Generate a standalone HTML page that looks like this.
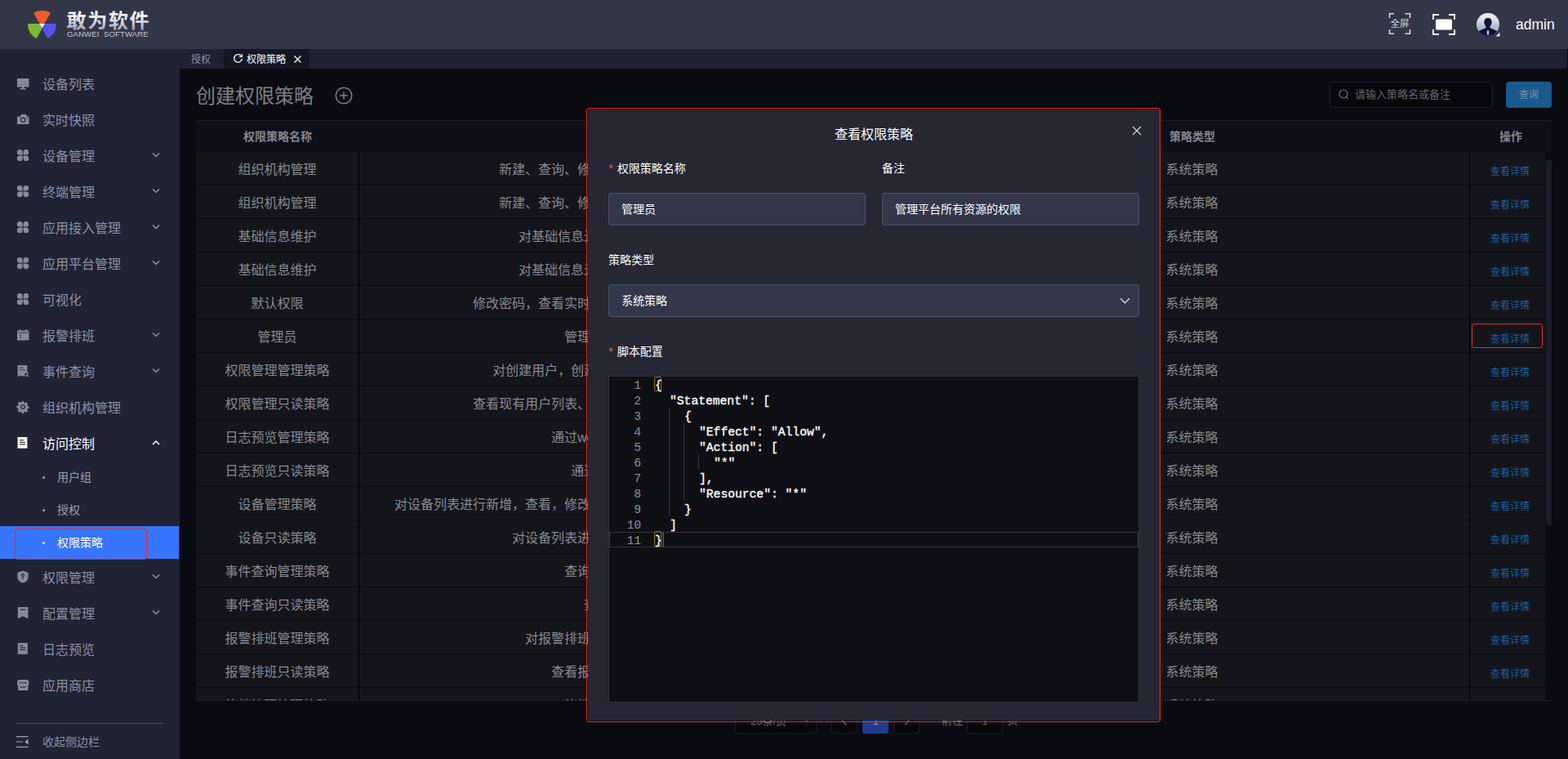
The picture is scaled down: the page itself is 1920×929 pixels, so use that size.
<!DOCTYPE html><html lang="zh-CN"><head>
<meta charset="utf-8">
<title>权限策略</title>
<style>
*{box-sizing:border-box;margin:0;padding:0}
html,body{width:1920px;height:929px;overflow:hidden;background:#0a0b11;font-family:"Liberation Sans","Noto Sans CJK SC",sans-serif;color:#8c8e95}
.abs{position:absolute}
#header{position:absolute;left:0;top:0;width:1920px;height:60px;background:#323748}
#sidebar{position:absolute;left:0;top:60px;width:220px;height:869px;background:#1f2333}
#tabbar{position:absolute;left:220px;top:60px;width:1699px;height:24px;background:#1d2131;border-radius:0 0 4px 0}
#content{position:absolute;left:220px;top:84px;width:1700px;height:845px;background:#0a0b11;overflow:hidden}
/* sidebar */
.mi{position:absolute;left:0;width:220px;height:44px;line-height:47px;font-size:16px;color:#8b91a5;padding-left:52px;white-space:nowrap}
.mi svg.ic{position:absolute;left:20px;top:14px;width:16px;height:16px}
.mi svg.ar{position:absolute;left:186px;top:18px;width:10px;height:8px}
.si{position:absolute;left:0;width:219px;height:40px;line-height:41px;font-size:14px;color:#9da0ab;padding-left:70px;white-space:nowrap}
.si i{position:absolute;left:52px;top:18.5px;width:3px;height:3px;border-radius:50%;background:#9da0ab}
.si.on{background:#3875ff;color:#fff}
.si.on i{background:#fff}


.th{position:absolute;top:64px;height:38px;line-height:39px;font-size:14px;font-weight:bold;color:#85878e;text-align:center;white-space:nowrap}
.tr{position:absolute;left:0;width:1660px;height:41px}
.td{position:absolute;top:0;height:40px;line-height:43.5px;font-size:16px;color:#888a91;background:#13151b;white-space:nowrap;overflow:hidden;text-align:center}
.c1{left:0;width:199px}.c2{left:200px;width:679px;text-align:left}.c3{left:880px;width:679px}.c4{left:1560px;width:92px;font-size:12px;color:#1c5d9e;padding-left:6px;line-height:48px}
.pb{position:absolute;top:786px;height:28px;line-height:23px;font-size:13px;color:#6a6c73;border:1px solid #1c1e27;border-radius:3px;background:#07080c;text-align:center;white-space:nowrap}

#modal{position:absolute;left:720px;top:134px;width:700px;height:748px}
.lb{position:absolute;height:20px;line-height:20px;font-size:14px;color:#fff;white-space:nowrap}
.lb b{color:#f4565c;font-weight:normal;margin-right:5px;font-size:15px}
.ip{position:absolute;height:40px;line-height:38px;font-size:14px;color:#fff;padding-left:15px;background:#32384a;border:1px solid #4b5162;border-radius:3px;white-space:nowrap;overflow:hidden}
#ed{position:absolute;left:25px;top:326px;width:650px;height:400px;background:#0e0f15;border:1px solid #2e3037;overflow:hidden}
.ln{position:absolute;left:0;width:39px;height:19px;line-height:19px;text-align:right;font-family:"Liberation Mono",monospace;font-size:14.67px;color:#8e8f94;white-space:pre}
.cl{position:absolute;left:54px;height:19px;line-height:19px;font-family:"Liberation Mono",monospace;font-size:14.67px;color:#fff;white-space:pre;-webkit-text-stroke:0.35px #fff}
</style>
</head>
<body>
<div id="header">
<svg class="abs" style="left:30px;top:8px" width="44" height="44" viewBox="30 8 44 44">
<path d="M51.5 34 L41 15.8 A21 21 0 0 1 62 15.8 Z" fill="#f05a2b"></path>
<path d="M55 29 L34 29 A21 21 0 0 0 44.5 47.2 Z" fill="#7ab832"></path>
<path d="M48 29 L69 29 A21 21 0 0 1 58.5 47.2 Z" fill="#5652e8"></path>
<path d="M48 29 L55 29 L51.5 34 Z" fill="#ffffff"></path>
</svg>
<svg class="abs" id="logot" style="left:80px;top:10px" width="112" height="30" viewBox="-1.500 -23.500 112 30"><defs><linearGradient id="lg" x1="0" y1="-20" x2="0" y2="2" gradientUnits="userSpaceOnUse"><stop offset=".2" stop-color="#ffffff"></stop><stop offset="1" stop-color="#a4a8b8"></stop></linearGradient></defs><text x="0" y="0" font-size="24" font-weight="bold" letter-spacing="1.7" fill="url(#lg)" font-family="'Liberation Sans','Noto Sans CJK SC',sans-serif">敢为软件</text></svg>
<div class="abs" style="left:82px;top:37px;height:10px;line-height:10px;font-size:9.6px;color:#c5c8d2;white-space:pre;letter-spacing:0.1px">GANWEI  SOFTWARE</div>
<svg class="abs" style="left:1700px;top:15px" width="28" height="28" viewBox="0 0 28 28" fill="none" stroke="#d5d9ee" stroke-width="1.6">
<path d="M1.5 7V1.8H7M20.5 1.8H26.5V7M26.5 21V26.2H20.5M7 26.2H1.5V21"></path>
</svg>
<svg class="abs" style="left:1702px;top:20px" width="26" height="18" viewBox="-.5 -13.200 26 18"><text x="0" y="0" font-size="11.5" fill="#d0d2da" font-family="'Liberation Sans','Noto Sans CJK SC',sans-serif">全屏</text></svg>
<svg class="abs" style="left:1753px;top:16px" width="30" height="28" viewBox="0 0 30 28" fill="none" stroke="#ffffff" stroke-width="1.800">
<path d="M2 8V2H9M21 2H28V8M28 20V26H21M9 26H2V20"></path>
<rect x="5" y="7.5" width="20" height="13" rx="1.5" fill="#fff" stroke="none"></rect>
</svg>
<svg class="abs" style="left:1807px;top:15px" width="30" height="30" viewBox="0 0 30 30">
<defs><linearGradient id="ag" x1="0" y1="0" x2="0" y2="1"><stop offset="0" stop-color="#fafbfd"></stop><stop offset="1" stop-color="#8b93ab"></stop></linearGradient>
<clipPath id="ac"><circle cx="15" cy="15" r="14"></circle></clipPath></defs>
<circle cx="15" cy="15" r="14" fill="url(#ag)"></circle>
<g clip-path="url(#ac)" fill="#0c1530">
<ellipse cx="15" cy="12.3" rx="4.7" ry="5.6"></ellipse>
<path d="M12.6 16h4.8v3l7.6 3.4c1.6.8 2.4 2 2.4 4V30H2.600v-3.600c0-2 .8-3.200 2.400-4l7.600-3.400z"></path>
<path d="M14.200 22h1.600l.5 4.500-1.300 1.700-1.300-1.700z" fill="#c9cedc"></path>
</g>
<path d="M29.500 24.500V29.500H24.500z" fill="#e6e8ef"></path>
</svg>
<div class="abs" style="left:1856px;top:19px;height:22px;line-height:22px;font-size:17.5px;color:#fff;white-space:nowrap">admin</div>
</div>
<div id="sidebar">
<div class="mi" style="top:20px"><svg class="ic" style="top:14px" viewBox="0 0 16 16"><g transform="translate(0,.6)"><path d="M1 1.500h14.400v10.500H1z M7 12h2.400v1.600H7z M4.500 13.500h7.400V15H4.500z" fill="#878b99"></path><rect x="2.200" y="8.600" width="12" height="1" fill="#6c7080"></rect></g></svg>设备列表</div>
<div class="mi" style="top:64px"><svg class="ic" style="top:14px" viewBox="0 0 16 16"><g transform="translate(0,1)"><path d="M1 3.600h4l1-2.600h6l1 2.600h2.400V13H1z" fill="#878b99"></path><circle cx="8.200" cy="7.700" r="2.600" fill="none" stroke="#1f2333" stroke-width="1.100"></circle><rect x="12.600" y="5" width="1" height="1.600" fill="#1f2333"></rect></g></svg>实时快照</div>
<div class="mi" style="top:108px"><svg class="ic" style="top:14px" viewBox="0 0 16 16"><path d="M4.200 .9a3.400 3.400 0 0 1 3.400 3.400v3.300H4.200a3.350 3.350 0 0 1 0-6.700z M11.900 .9a3.350 3.350 0 0 1 0 6.700H8.500V4.300A3.400 3.400 0 0 1 11.900 .9z M4.200 15.200a3.350 3.350 0 0 1 0-6.700h3.400v3.300a3.400 3.400 0 0 1-3.400 3.400z M11.900 15.200a3.400 3.400 0 0 1-3.400-3.400V8.500h3.400a3.350 3.350 0 0 1 0 6.700z" fill="#878b99"></path></svg>设备管理<svg class="ar" viewBox="0 0 10 8" fill="none" stroke="#8b91a5" stroke-width="1.500"><path d="M1 1.500l4 4 4-4"></path></svg></div>
<div class="mi" style="top:152px"><svg class="ic" style="top:14px" viewBox="0 0 16 16"><path d="M4.200 .9a3.400 3.400 0 0 1 3.400 3.400v3.300H4.200a3.350 3.350 0 0 1 0-6.700z M11.900 .9a3.350 3.350 0 0 1 0 6.700H8.500V4.300A3.400 3.400 0 0 1 11.900 .9z M4.200 15.200a3.350 3.350 0 0 1 0-6.700h3.400v3.300a3.400 3.400 0 0 1-3.400 3.400z M11.900 15.200a3.400 3.400 0 0 1-3.400-3.400V8.500h3.400a3.350 3.350 0 0 1 0 6.700z" fill="#878b99"></path></svg>终端管理<svg class="ar" viewBox="0 0 10 8" fill="none" stroke="#8b91a5" stroke-width="1.500"><path d="M1 1.500l4 4 4-4"></path></svg></div>
<div class="mi" style="top:196px"><svg class="ic" style="top:14px" viewBox="0 0 16 16"><path d="M4.200 .9a3.400 3.400 0 0 1 3.400 3.400v3.300H4.200a3.350 3.350 0 0 1 0-6.700z M11.900 .9a3.350 3.350 0 0 1 0 6.700H8.500V4.300A3.400 3.400 0 0 1 11.900 .9z M4.200 15.200a3.350 3.350 0 0 1 0-6.700h3.400v3.300a3.400 3.400 0 0 1-3.400 3.400z M11.900 15.200a3.400 3.400 0 0 1-3.400-3.400V8.500h3.400a3.350 3.350 0 0 1 0 6.700z" fill="#878b99"></path></svg>应用接入管理<svg class="ar" viewBox="0 0 10 8" fill="none" stroke="#8b91a5" stroke-width="1.500"><path d="M1 1.500l4 4 4-4"></path></svg></div>
<div class="mi" style="top:240px"><svg class="ic" style="top:14px" viewBox="0 0 16 16"><path d="M4.200 .9a3.400 3.400 0 0 1 3.400 3.400v3.300H4.200a3.350 3.350 0 0 1 0-6.700z M11.900 .9a3.350 3.350 0 0 1 0 6.700H8.500V4.300A3.400 3.400 0 0 1 11.900 .9z M4.200 15.200a3.350 3.350 0 0 1 0-6.700h3.400v3.300a3.400 3.400 0 0 1-3.400 3.400z M11.900 15.200a3.400 3.400 0 0 1-3.400-3.400V8.500h3.400a3.350 3.350 0 0 1 0 6.700z" fill="#878b99"></path></svg>应用平台管理<svg class="ar" viewBox="0 0 10 8" fill="none" stroke="#8b91a5" stroke-width="1.500"><path d="M1 1.500l4 4 4-4"></path></svg></div>
<div class="mi" style="top:284px"><svg class="ic" style="top:14px" viewBox="0 0 16 16"><path d="M4.200 .9a3.400 3.400 0 0 1 3.400 3.400v3.300H4.200a3.350 3.350 0 0 1 0-6.700z M11.900 .9a3.350 3.350 0 0 1 0 6.700H8.500V4.300A3.400 3.400 0 0 1 11.900 .9z M4.200 15.200a3.350 3.350 0 0 1 0-6.700h3.400v3.300a3.400 3.400 0 0 1-3.400 3.400z M11.900 15.200a3.400 3.400 0 0 1-3.400-3.400V8.500h3.400a3.350 3.350 0 0 1 0 6.700z" fill="#878b99"></path></svg>可视化</div>
<div class="mi" style="top:328px"><svg class="ic" style="top:14px" viewBox="0 0 16 16"><path d="M1 2.600h2.600V1h1.800v1.600h5.600V1h1.800v1.600h2.600V14.400H1z" fill="#878b99"></path><rect x="2" y="4.600" width="12.400" height="1" fill="#1f2333" opacity=".75"></rect><rect x="4" y="7.400" width="2.400" height="1.200" fill="#1f2333" opacity=".8"></rect><rect x="4" y="10.400" width="2.400" height="1.200" fill="#1f2333" opacity=".8"></rect></svg>报警排班<svg class="ar" viewBox="0 0 10 8" fill="none" stroke="#8b91a5" stroke-width="1.500"><path d="M1 1.500l4 4 4-4"></path></svg></div>
<div class="mi" style="top:372px"><svg class="ic" style="top:14px" viewBox="0 0 16 16"><path d="M1.600 1h11.800v9.500a3.400 3.400 0 0 0-4.400 4H7.200l-1.600-1.300L4 14.500H1.600z" fill="#878b99"></path><rect x="4" y="3.600" width="5" height="1.100" fill="#1f2333" opacity=".7"></rect><rect x="4" y="6.200" width="7" height="1.100" fill="#1f2333" opacity=".7"></rect><circle cx="11.800" cy="12" r="2.100" fill="none" stroke="#878b99" stroke-width="1.200"></circle><path d="M13.300 13.500l1.700 1.700" stroke="#878b99" stroke-width="1.200"></path></svg>事件查询<svg class="ar" viewBox="0 0 10 8" fill="none" stroke="#8b91a5" stroke-width="1.500"><path d="M1 1.500l4 4 4-4"></path></svg></div>
<div class="mi" style="top:416px"><svg class="ic" style="top:14px" viewBox="0 0 16 16"><path d="M6.800 1h2.400l.4 1.800 1.300.6 1.600-1 1.700 1.700-1 1.600.6 1.300 1.800.4v2.400l-1.800.4-.6 1.300 1 1.600-1.700 1.700-1.600-1-1.300.6-.4 1.800H6.800l-.4-1.800-1.300-.6-1.600 1-1.700-1.700 1-1.600-.6-1.300L.4 9.200V6.800l1.800-.4.600-1.300-1-1.600 1.700-1.700 1.600 1 1.300-.6z" fill="#878b99"></path><circle cx="8" cy="8" r="2.300" fill="none" stroke="#1f2333" stroke-width="1.300"></circle></svg>组织机构管理</div>
<div class="mi" style="top:460px;color:#fff"><svg class="ic" style="top:14px" viewBox="0 0 16 16"><path d="M1.600 1h11.800v14.200l-1.500-1-1.500 1-1.400-1-1.500 1-1.500-1-1.500 1-1.500-1-1.400 1z" fill="#ffffff"></path><rect x="4" y="4.200" width="5" height="1.100" fill="#1f2333"></rect><rect x="4" y="6.800" width="7" height="1.100" fill="#1f2333"></rect><rect x="4" y="9.400" width="7" height="1.100" fill="#1f2333"></rect></svg>访问控制<svg class="ar" viewBox="0 0 10 8" fill="none" stroke="#ffffff" stroke-width="1.500"><path d="M1 6l4-4 4 4"></path></svg></div>
<div class="si" style="top:504px"><i></i>用户组</div>
<div class="si" style="top:544px"><i></i>授权</div>
<div class="si on" style="top:584px"><i></i>权限策略</div>
<div class="abs" style="left:18px;top:587px;width:162px;height:38px;border:1px solid #f2232a;border-radius:3px"></div>
<div class="mi" style="top:624px"><svg class="ic" style="top:14px" viewBox="0 0 16 16"><path d="M8 .600l6.600 2.400v5.200c0 3.400-2.600 6-6.600 7.400C4 14.200 1.400 11.600 1.400 8.200V3z" fill="#878b99"></path><circle cx="8" cy="5.800" r="1.500" fill="none" stroke="#1f2333" stroke-width="1.100"></circle><rect x="7.450" y="7.200" width="1.100" height="4" fill="#1f2333"></rect></svg>权限管理<svg class="ar" viewBox="0 0 10 8" fill="none" stroke="#8b91a5" stroke-width="1.500"><path d="M1 1.500l4 4 4-4"></path></svg></div>
<div class="mi" style="top:668px"><svg class="ic" style="top:14px" viewBox="0 0 16 16"><path d="M1.800 1h12.600v14.200L8.100 12.200 1.800 15.200z" fill="#878b99"></path><rect x="5" y="3.600" width="6.200" height="1.200" fill="#1f2333"></rect></svg>配置管理<svg class="ar" viewBox="0 0 10 8" fill="none" stroke="#8b91a5" stroke-width="1.500"><path d="M1 1.500l4 4 4-4"></path></svg></div>
<div class="mi" style="top:712px"><svg class="ic" style="top:14px" viewBox="0 0 16 16"><path d="M1.800 1h12v14.200l-1.500-1-1.500 1-1.500-1-1.500 1-1.500-1-1.500 1-1.500-1-1.500 1z" fill="#878b99"></path><rect x="4.200" y="3.800" width="4" height="1.100" fill="#1f2333"></rect><rect x="4.200" y="6.300" width="7" height="1.100" fill="#1f2333"></rect><rect x="4.200" y="8.800" width="7" height="1.100" fill="#1f2333"></rect></svg>日志预览</div>
<div class="mi" style="top:756px"><svg class="ic" style="top:14px" viewBox="0 0 16 16"><g transform="translate(0,.5)"><path d="M3.600 1.600h9.200c1.400 0 2.600 1.400 2.600 3v2.200c0 .8-.5 1.300-1 1.500v4.900c0 .8-.6 1.400-1.400 1.400H3.400c-.8 0-1.400-.6-1.400-1.400V8.300c-.5-.2-1-.7-1-1.500V4.600c0-1.600 1.200-3 2.600-3z" fill="#878b99"></path><rect x="3.200" y="4.600" width="10" height="1.100" fill="#1f2333" opacity=".8"></rect><rect x="4.400" y="9.800" width="7.600" height="1.300" fill="#1f2333" opacity=".8"></rect></g></svg>应用商店</div>
<div class="abs" style="left:20px;top:825px;width:180px;height:1px;background:#474c5f"></div>
<div class="abs" style="left:52px;top:838px;height:20px;line-height:20px;font-size:14px;color:#8b91a5;white-space:nowrap">收起侧边栏</div>
<svg class="abs" style="left:20px;top:840px" width="16" height="16" viewBox="0 0 16 16" fill="none" stroke="#9da1b0" stroke-width="1.200"><path d="M0 1.600h14.500M0 8h8M0 14.400h14.500"></path><path d="M14.600 4.600v6.800L10.200 8z" fill="#9da1b0" stroke="none"></path></svg>
</div>
<div id="tabbar">
<div class="abs" style="left:0;top:0;width:52px;height:24px;line-height:27px;font-size:12px;color:#8c90a0;text-align:center;white-space:nowrap">授权</div>
<div class="abs" style="left:54px;top:0;width:105px;height:24px;background:#141722"></div>
<svg class="abs" style="left:65px;top:5px" width="13" height="13" viewBox="0 0 13 13" fill="none" stroke="#fff" stroke-width="1.300"><path d="M10.800 4.200A4.800 4.800 0 1 0 11.300 6.800"></path><path d="M11.300 1v3.500H7.800" stroke-width="1.200"></path></svg>
<div class="abs" style="left:82px;top:0;height:24px;line-height:27px;font-size:12px;color:#fff;white-space:nowrap">权限策略</div>
<svg class="abs" style="left:140px;top:8px" width="9" height="9" viewBox="0 0 9 9" stroke="#fff" stroke-width="1.200"><path d="M.5.500l8 8M8.500.500l-8 8"></path></svg>
</div>
<div id="content">
<div class="abs" style="left:20px;top:17px;height:34px;line-height:34px;font-size:24px;color:#7d7f87;white-space:nowrap">创建权限策略</div>
<svg class="abs" style="left:190px;top:22px" width="22" height="22" viewBox="0 0 22 22" fill="none" stroke="#7d7f87" stroke-width="1.500"><circle cx="11" cy="11" r="9.800"></circle><path d="M11 6.200v9.600M6.200 11h9.600"></path></svg>
<div class="abs" style="left:1408px;top:16px;width:200px;height:32px;border:1px solid #1d1f28;border-radius:4px;background:#07080c"></div>
<svg class="abs" style="left:1418px;top:24px" width="15" height="15" viewBox="0 0 15 15" fill="none" stroke="#6d6f76" stroke-width="1.200"><circle cx="7" cy="7" r="5"></circle><path d="M10.600 10.600l2.200 2.200"></path></svg>
<div class="abs" style="left:1439px;top:16px;height:32px;line-height:32px;font-size:13px;color:#62646b;white-space:nowrap">请输入策略名或备注</div>
<div class="abs" style="left:1624px;top:16px;width:56px;height:32px;line-height:33px;border-radius:4px;background:#195a8c;color:#7793ad;font-size:12px;text-align:center;white-space:nowrap">查询</div>
<div class="abs" style="left:20px;top:63px;width:1660px;height:1px;background:#1c1e27"></div>
<div class="abs" style="left:20px;top:64px;width:1660px;height:38px;background:#0c0e18"></div>
<div class="th" style="left:20px;width:200px">权限策略名称</div>
<div class="th" style="left:900px;width:680px">策略类型</div>
<div class="th" style="left:1580px;width:100px">操作</div>
<div class="abs" id="tb" style="left:20px;top:102px;width:1660px;height:671px;overflow:hidden;background:#0a0b10">
<div class="tr" style="top:0px"><div class="td c1">组织机构管理</div><div class="td c2" style="padding-left:171px">新建、查询、修改、删除组织机构及其下属的用户信息</div><div class="td c3">系统策略</div><div class="td c4">查看详情</div></div>
<div class="tr" style="top:41px"><div class="td c1">组织机构管理</div><div class="td c2" style="padding-left:171px">新建、查询、修改、删除组织机构及其下属的用户信息</div><div class="td c3">系统策略</div><div class="td c4">查看详情</div></div>
<div class="tr" style="top:82px"><div class="td c1">基础信息维护</div><div class="td c2" style="padding-left:195px">对基础信息进行新增、修改、删除和查看的权限</div><div class="td c3">系统策略</div><div class="td c4">查看详情</div></div>
<div class="tr" style="top:123px"><div class="td c1">基础信息维护</div><div class="td c2" style="padding-left:195px">对基础信息进行新增、修改、删除和查看的权限</div><div class="td c3">系统策略</div><div class="td c4">查看详情</div></div>
<div class="tr" style="top:164px"><div class="td c1">默认权限</div><div class="td c2" style="padding-left:139px">修改密码，查看实时快照、设备列表等默认页面的基础权限</div><div class="td c3">系统策略</div><div class="td c4">查看详情</div></div>
<div class="tr" style="top:205px"><div class="td c1">管理员</div><div class="td c2" style="padding-left:251px">管理平台所有资源的权限</div><div class="td c3">系统策略</div><div class="td c4">查看详情</div></div>
<div class="tr" style="top:246px"><div class="td c1">权限管理管理策略</div><div class="td c2" style="padding-left:163px">对创建用户，创建用户组，创建策略以及授权的管理</div><div class="td c3">系统策略</div><div class="td c4">查看详情</div></div>
<div class="tr" style="top:287px"><div class="td c1">权限管理只读策略</div><div class="td c2" style="padding-left:139px">查看现有用户列表、用户组列表、策略列表的只读权限</div><div class="td c3">系统策略</div><div class="td c4">查看详情</div></div>
<div class="tr" style="top:328px"><div class="td c1">日志预览管理策略</div><div class="td c2" style="padding-left:235px">通过web页面查看并导出系统日志</div><div class="td c3">系统策略</div><div class="td c4">查看详情</div></div>
<div class="tr" style="top:369px"><div class="td c1">日志预览只读策略</div><div class="td c2" style="padding-left:259px">通过页面只读查看系统日志</div><div class="td c3">系统策略</div><div class="td c4">查看详情</div></div>
<div class="tr" style="top:410px"><div class="td c1">设备管理策略</div><div class="td c2" style="padding-left:43px">对设备列表进行新增，查看，修改，删除，以及对测点、模板的所有管理操作权限</div><div class="td c3">系统策略</div><div class="td c4">查看详情</div></div>
<div class="tr" style="top:451px"><div class="td c1">设备只读策略</div><div class="td c2" style="padding-left:187px">对设备列表进行查看及测点查看的只读权限</div><div class="td c3">系统策略</div><div class="td c4">查看详情</div></div>
<div class="tr" style="top:492px"><div class="td c1">事件查询管理策略</div><div class="td c2" style="padding-left:251px">查询并导出所有事件记录</div><div class="td c3">系统策略</div><div class="td c4">查看详情</div></div>
<div class="tr" style="top:533px"><div class="td c1">事件查询只读策略</div><div class="td c2" style="padding-left:275px">查询事件记录的只读权</div><div class="td c3">系统策略</div><div class="td c4">查看详情</div></div>
<div class="tr" style="top:574px"><div class="td c1">报警排班管理策略</div><div class="td c2" style="padding-left:203px">对报警排班进行新增修改删除的管理</div><div class="td c3">系统策略</div><div class="td c4">查看详情</div></div>
<div class="tr" style="top:615px"><div class="td c1">报警排班只读策略</div><div class="td c2" style="padding-left:235px">查看报警排班的只读权限</div><div class="td c3">系统策略</div><div class="td c4">查看详情</div></div>
<div class="tr" style="top:656px"><div class="td c1">终端管理管理策略</div><div class="td c2" style="padding-left:251px">终端的所有管理权限</div><div class="td c3">系统策略</div><div class="td c4">查看详情</div></div>
<div class="abs" style="left:199px;top:0;width:1px;height:671px;background:#000"></div>
<div class="abs" style="left:879px;top:0;width:1px;height:671px;background:#000"></div>
<div class="abs" style="left:1559px;top:0;width:1px;height:671px;background:#000"></div>
<div class="abs" style="left:1652px;top:0;width:8px;height:671px;background:#0a0b10"></div>
<div class="abs" style="left:1652.500px;top:9px;width:7px;height:448px;border-radius:3.500px;background:#1a1d27"></div>
</div>
<div class="abs" style="left:20px;top:773px;width:1660px;height:1px;background:#1e2029"></div>
<div class="abs" style="left:1582px;top:312px;width:87px;height:30px;border:1px solid #f2232a;border-radius:3px"></div>
<div id="pager">
<div class="pb" style="left:680px;width:100px;text-align:left;padding-left:18px">25条/页<svg class="abs" style="left:82px;top:7px" width="9" height="7" viewBox="0 0 9 7" fill="none" stroke="#55575e" stroke-width="1.200"><path d="M1 1l3.500 3.800L8 1"></path></svg></div>
<div class="pb" style="left:798px;width:32px"><svg class="abs" style="left:11px;top:6px" width="8" height="11" viewBox="0 0 8 11" fill="none" stroke="#6a6c73" stroke-width="1.300"><path d="M6 1L1.500 5.500 6 10"></path></svg></div>
<div class="pb" style="left:836px;width:32px;background:#1e3b8c;border-color:#1e3b8c;color:#8e9cc4">1</div>
<div class="pb" style="left:874px;width:32px"><svg class="abs" style="left:11px;top:6px" width="8" height="11" viewBox="0 0 8 11" fill="none" stroke="#6a6c73" stroke-width="1.300"><path d="M2 1l4.500 4.500L2 10"></path></svg></div>
<div class="pb" style="left:928px;width:36px;border:none;background:none">前往</div>
<div class="pb" style="left:964px;width:44px">1</div>
<div class="pb" style="left:1008px;width:24px;border:none;background:none">页</div>
</div>
</div>
<div id="modal">
<div class="abs" style="left:0;top:0;width:700px;height:748px;background:#252733"></div>
<div class="abs" style="left:0;top:17px;width:700px;height:28px;line-height:28px;font-size:16px;color:#fff;text-align:center;white-space:nowrap">查看权限策略</div>
<svg class="abs" style="left:666px;top:20px" width="12" height="12" viewBox="0 0 12 12" stroke="#dcdde2" stroke-width="1.100"><path d="M1 1l10 10M11 1L1 11"></path></svg>
<div class="lb" style="left:25px;top:62px"><b>*</b>权限策略名称</div>
<div class="lb" style="left:360px;top:62px">备注</div>
<div class="ip" style="left:25px;top:102px;width:315px">管理员</div>
<div class="ip" style="left:360px;top:102px;width:315px">管理平台所有资源的权限</div>
<div class="lb" style="left:25px;top:174px">策略类型</div>
<div class="ip" style="left:25px;top:214px;width:650px">系统策略</div>
<svg class="abs" style="left:651px;top:230px" width="13" height="9" viewBox="0 0 13 9" fill="none" stroke="#d6d8de" stroke-width="1.400"><path d="M1 1.200l5.500 5.600L12 1.200"></path></svg>
<div class="lb" style="left:25px;top:286px"><b>*</b>脚本配置</div>
<div id="ed">
<div class="abs" style="left:0;top:190px;width:648px;height:19px;border:1px solid #32343b"></div>
<div class="abs" style="left:73px;top:38px;width:1px;height:133px;background:#33343a"></div>
<div class="abs" style="left:91px;top:57px;width:1px;height:95px;background:#33343a"></div>
<div class="abs" style="left:109px;top:95px;width:1px;height:19px;background:#33343a"></div>
<div class="abs" style="left:55px;top:0;width:9px;height:18px;border:1px solid #857510;border-radius:2px"></div>
<div class="abs" style="left:55px;top:189px;width:9px;height:19px;border:1px solid #857510;border-radius:2px"></div>
<div class="abs" style="left:65px;top:190px;width:2px;height:19px;background:#46484f"></div>
<div class="ln" style="top:2px">1</div><div class="cl" style="top:2px;left:56px">{</div>
<div class="ln" style="top:21px">2</div><div class="cl" style="top:21px;left:74px">"Statement": [</div>
<div class="ln" style="top:40px">3</div><div class="cl" style="top:40px;left:92px">{</div>
<div class="ln" style="top:59px">4</div><div class="cl" style="top:59px;left:110px">"Effect": "Allow",</div>
<div class="ln" style="top:78px">5</div><div class="cl" style="top:78px;left:110px">"Action": [</div>
<div class="ln" style="top:97px">6</div><div class="cl" style="top:97px;left:128px">"*"</div>
<div class="ln" style="top:116px">7</div><div class="cl" style="top:116px;left:110px">],</div>
<div class="ln" style="top:135px">8</div><div class="cl" style="top:135px;left:110px">"Resource": "*"</div>
<div class="ln" style="top:154px">9</div><div class="cl" style="top:154px;left:92px">}</div>
<div class="ln" style="top:173px">10</div><div class="cl" style="top:173px;left:74px">]</div>
<div class="ln" style="top:192px">11</div><div class="cl" style="top:192px;left:56px">}</div>
</div>
<div class="abs" style="left:-2px;top:-2px;width:703px;height:752px;border:1px solid #ff2212;border-radius:3px"></div>
</div>


</body></html>
